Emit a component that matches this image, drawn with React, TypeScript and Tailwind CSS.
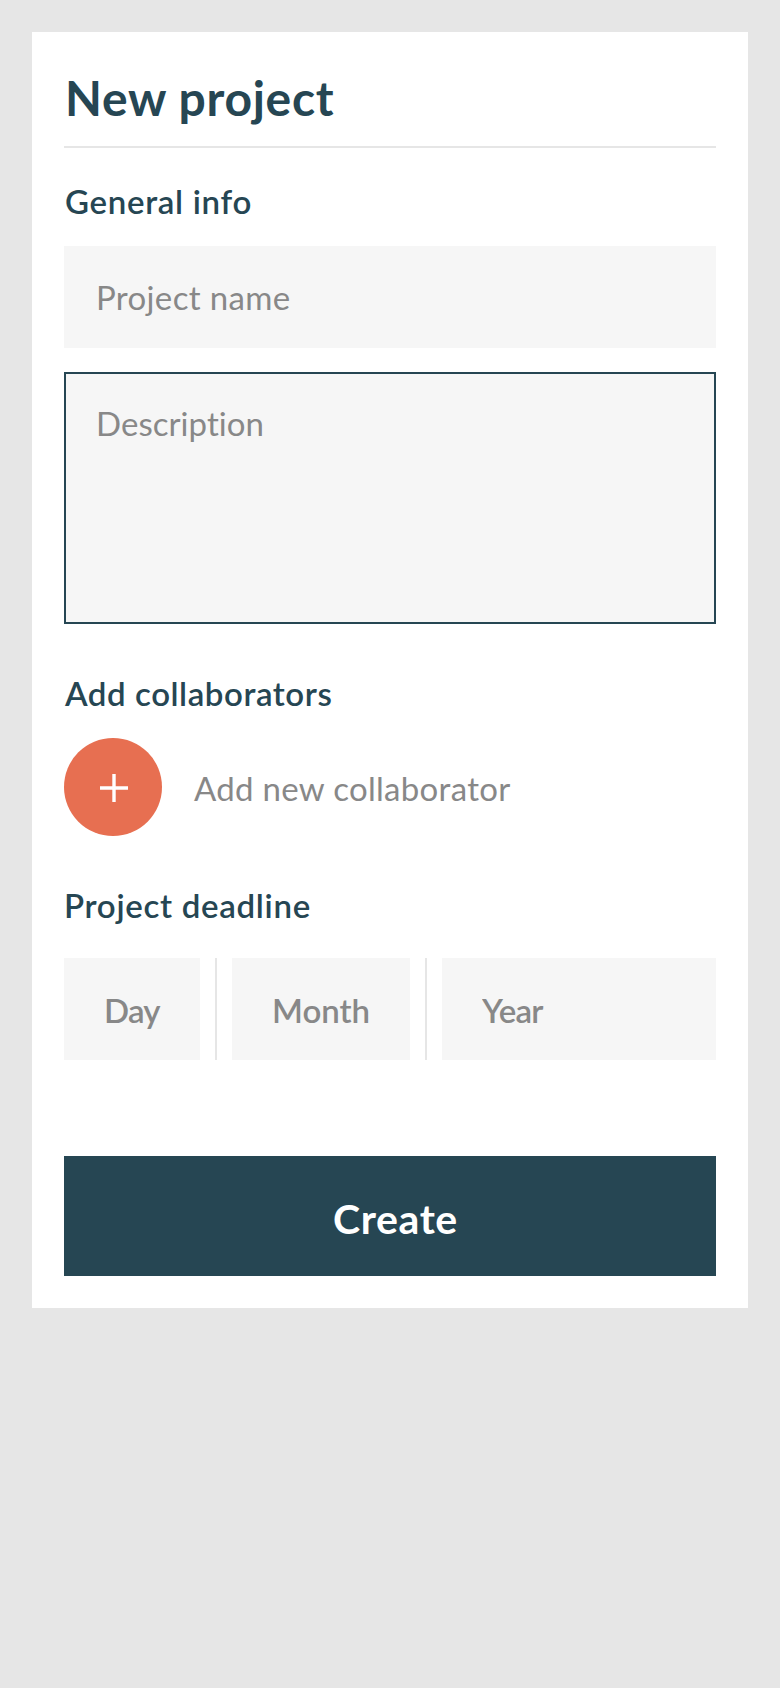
const heading = "h-10 text-[33px] leading-10 font-semibold";
const field = "block rounded-none bg-[#f6f6f6] text-[33px] placeholder:text-[#888888] placeholder:opacity-100 outline-none";

export default function App() {
  return (
    <main className="min-h-[1688px] bg-[#e6e6e6] p-8 font-['Lato',sans-serif] text-[#264653]">
      <form className="bg-white px-8 pt-[34px] pb-8">
        <h1 className="border-b-2 border-[#e6e6e6] pb-4 pl-px text-[48px] leading-[64px] font-bold tracking-[0.7px]">
          New project
        </h1>

        <h2 className={`${heading} mt-[33px] pl-px tracking-[0.7px]`}>General info</h2>
        <input
          className={`${field} mt-[25px] h-[102px] w-full px-8 tracking-[0.35px]`}
          placeholder="Project name"
        />
        <textarea
          className={`${field} mt-6 h-[252px] w-full resize-none border-2 border-[#264653] px-[30px] pt-[29px] leading-10 tracking-[0.05px] [font-variant-ligatures:none]`}
          placeholder="Description"
        />

        <h2 className={`${heading} mt-[49px] pl-px tracking-[0.57px]`}>Add collaborators</h2>
        <div className="mt-[25px] flex items-center gap-8">
          <button
            type="button"
            aria-label="Add new collaborator"
            className="size-[98px] rounded-full bg-[#e76f51]"
          >
            <svg viewBox="0 0 98 98" className="size-full" stroke="white" strokeWidth="3.4">
              <path d="M50 36v28M36 50h28" />
            </svg>
          </button>
          <span className="pt-px text-[33px] leading-10 tracking-[0.3px] text-[#888888]">
            Add new collaborator
          </span>
        </div>

        <h2 className={`${heading} mt-[49px] tracking-[0.7px]`}>Project deadline</h2>
        <div className="mt-[33px] flex h-[102px] gap-[15px]">
          <input
            className={`${field} w-[136px] pt-[3px] pl-10 font-semibold tracking-[-0.8px]`}
            placeholder="Day"
          />
          <div className="w-0.5 bg-[#e6e6e6]" />
          <input
            className={`${field} w-[178px] pt-[3px] pl-10 font-semibold`}
            placeholder="Month"
          />
          <div className="w-0.5 bg-[#e6e6e6]" />
          <input
            className={`${field} min-w-0 flex-1 pt-[3px] pl-10 font-semibold tracking-[-0.7px]`}
            placeholder="Year"
          />
        </div>

        <button
          type="button"
          className="mt-24 block h-[120px] w-full bg-[#264653] pt-1.5 pl-[11px] text-[41px] font-bold tracking-[0.6px] text-white"
        >
          Create
        </button>
      </form>
    </main>
  );
}
